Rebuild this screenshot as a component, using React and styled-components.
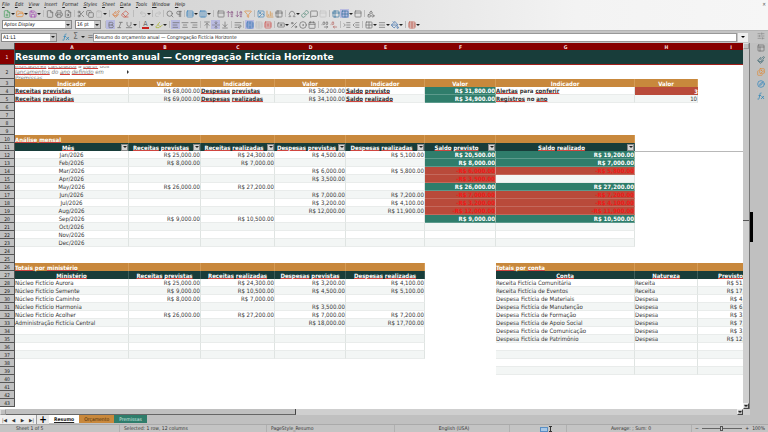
import React from 'react';
import styled, { createGlobalStyle, css } from 'styled-components';
import {
  FilePlus,
  FolderOpen,
  Save,
  File,
  Printer,
  FileSearch,
  Scissors,
  Copy,
  Clipboard,
  Paintbrush,
  Eraser,
  Undo2,
  Redo2,
  Search,
  Pilcrow,
  Rows3,
  Columns3,
  Table,
  Table2,
  ArrowUpAZ,
  ArrowDownAZ,
  Funnel,
  Image,
  ChartColumn,
  Omega,
  Link,
  MessageSquare,
  PanelTop,
  Grid2x2,
  Shapes,
  Bold,
  Italic,
  Underline,
  Highlighter,
  TextAlignStart,
  TextAlignCenter,
  TextAlignEnd,
  ArrowUpToLine,
  ArrowDownToLine,
  FoldVertical,
  WrapText,
  TableCellsMerge,
  TableCellsSplit,
  Banknote,
  Percent,
  CircleDot,
  Calendar,
  DecimalsArrowRight,
  DecimalsArrowLeft,
  ListIndentIncrease,
  ListIndentDecrease,
  Menu,
  PaintBucket,
  SlidersHorizontal,
  Images,
  Compass,
  PanelsTopLeft,
} from 'lucide-react';

const GlobalStyle = createGlobalStyle`
  * {
    box-sizing: border-box;
  }
  body {
    margin: 0;
    background: #c0c0c0;
    color: #333;
    font: 5px/8px 'DejaVu Sans Condensed', 'DejaVu Sans', sans-serif;
  }
  button,
  input,
  select {
    margin: 0;
    padding: 0;
    border: 0;
    border-radius: 0;
    background: none;
    color: inherit;
    font: inherit;
  }
`;

const Styled = {
  Window: styled.div`
    display: flex;
    flex-direction: column;
    height: 100vh;
    overflow: hidden;
  `,
  Chrome: styled.header`
    background: linear-gradient(90deg, #d0d0d0, #dadada 35%, #f3f3f3 75%, #f6f6f6);
    border-bottom: 1px solid #b4b4b4;
  `,
  MenuBar: styled.nav`
    display: flex;
    gap: 5px;
    height: 8px;
    padding: 0 2px;
    color: #222;
    font-style: italic;
    line-height: 7px;
  `,
  CloseButton: styled.button`
    margin-left: auto;
    line-height: 7px;
    color: #555;
  `,
  Toolbar: styled.div`
    display: flex;
    align-items: center;
    height: 11px;
    padding-left: 2px;
  `,
  Tool: styled.button`
    display: flex;
    flex: none;
    align-items: center;
    justify-content: center;
    width: 9px;
    height: 9px;
    color: ${({ $color }) => $color || '#666'};
    background: ${({ $active }) => ($active ? '#b9bbe0' : 'transparent')};
    opacity: ${({ $faded }) => ($faded ? 0.25 : 1)};
  `,
  Caret: styled.button`
    display: flex;
    flex: none;
    align-items: center;
    justify-content: center;
    width: 4px;
    height: 9px;
  `,
  CaretMark: styled.span`
    border: 2px solid transparent;
    border-top-color: ${({ $color }) => $color || '#222'};
    border-bottom: 0;
  `,
  Separator: styled.span`
    flex: none;
    width: ${({ $width }) => $width || 4}px;
    height: 7px;
    background: linear-gradient(#bbb, #bbb) center / 1px 100% no-repeat;
  `,
  ColorLetter: styled.span`
    width: 7px;
    height: 8px;
    border-bottom: 2px solid #c9211e;
    font-size: 7px;
    line-height: 6px;
    text-align: center;
  `,
  Combo: styled.label`
    display: flex;
    flex: none;
    width: ${({ $width }) => $width}px;
    height: 9px;
    margin-right: 3px;
    border: 1px solid #888;
    background: #fff;
    line-height: 7px;
  `,
  ComboInput: styled.input`
    flex: 1;
    min-width: 0;
    padding-left: 1px;
    color: #111;
    font-style: ${({ $italic }) => ($italic ? 'italic' : 'normal')};
    outline: 0;
  `,
  ComboArrow: styled.button`
    display: flex;
    align-items: center;
    justify-content: center;
    width: 6px;
    background: #c8c8c8;
  `,
  FormulaBar: styled.div`
    display: flex;
    align-items: center;
    height: 12px;
    padding: 0 20px 0 1px;
    background: #c4c4c4;
  `,
  FormulaTools: styled.div`
    display: flex;
    width: 33px;
    align-items: center;
    gap: 1px;
    padding-left: 1px;
    font-size: 8px;
  `,
  FormulaInput: styled.input`
    flex: 1;
    min-width: 0;
    height: 9px;
    padding-left: 1px;
    border: 1px solid #999;
    background: #fff;
    color: #222;
    outline: 0;
  `,
  FormulaExpand: styled.button`
    display: flex;
    align-items: center;
    justify-content: center;
    width: 10px;
    height: 9px;
    margin-left: 1px;
    background: #eee;
  `,
  Body: styled.div`
    display: flex;
    flex: 1;
    min-height: 0;
  `,
  SheetArea: styled.main`
    display: flex;
    flex: 1;
    flex-direction: column;
    min-width: 0;
  `,
  SheetRow: styled.div`
    display: flex;
    flex: 1;
    min-height: 0;
  `,
  Viewport: styled.div`
    flex: 1;
    min-width: 0;
    overflow: hidden;
    background: #fff;
  `,
  VerticalBar: styled.div`
    display: flex;
    flex-direction: column;
    justify-content: space-between;
    width: 7px;
    background: #cfcfcf;
    border-right: 1px solid #777;
  `,
  VerticalThumb: styled.div`
    height: 172px;
    margin-bottom: auto;
    background: #c6c6c6;
    border-bottom: 1px solid #555;
  `,
  BarButton: styled.button`
    display: flex;
    flex: none;
    align-items: center;
    justify-content: center;
    width: 6px;
    height: 6px;
    background: #c0c0c0;
    border: 1px solid;
    border-color: ${({ $soft }) => ($soft ? '#ddd #999 #999 #ddd' : '#eee #444 #444 #eee')};
  `,
  HorizontalBar: styled.div`
    display: flex;
    justify-content: space-between;
    height: 6px;
    padding-right: 7px;
    background: #cfcfcf;
  `,
  HorizontalThumb: styled.div`
    width: 39%;
    margin-right: auto;
    background: #c0c0c0;
    border-right: 1px solid #444;
    border-bottom: 1px solid #666;
  `,
  Sidebar: styled.aside`
    display: flex;
    width: 18px;
    background: #c0c0c0;
  `,
  SidebarHandle: styled.button`
    align-self: center;
    width: 3px;
    height: 30px;
    margin-bottom: 14px;
    background: #000;
  `,
  SidebarIcons: styled.div`
    display: flex;
    flex: 1;
    flex-direction: column;
    align-items: center;
    gap: 3px;
    margin-top: -12px;
  `,
  Tabs: styled.div`
    display: flex;
    height: 9px;
    background: #c0c0c0;
  `,
  TabNav: styled.button`
    width: 9px;
    background: #f0f0f0;
    line-height: 8px;
  `,
  AddTab: styled.button`
    width: 13px;
    background: #e8e8e8;
    border-left: 1px solid #999;
    color: #000;
    font-size: 10px;
    font-weight: 700;
    line-height: 8px;
  `,
  Tab: styled.button`
    height: 8px;
    padding: 0 5px;
    background: ${({ $color }) => $color};
    color: ${({ $text }) => $text};
    font-weight: ${({ $active }) => ($active ? 700 : 400)};
    text-decoration: ${({ $active }) => ($active ? 'underline' : 'none')};
    line-height: 8px;
  `,
  StatusBar: styled.footer`
    display: grid;
    grid-template-columns: 120fr 147fr 128fr 115fr 57fr 125fr 76fr;
    height: 8px;
    background: #c4c4c4;
    border-top: 1px solid #aaa;
    line-height: 7px;
  `,
  StatusItem: styled.div`
    display: flex;
    align-items: center;
    justify-content: ${({ $align }) => $align || 'flex-start'};
    padding-left: ${({ $indent }) => $indent || 4}px;
    border-right: 1px solid #b0b0b0;
    white-space: nowrap;
  `,
  Zoom: styled.div`
    display: flex;
    align-items: center;
    justify-content: space-between;
    padding: 0 3px;
  `,
  ZoomSlider: styled.input`
    appearance: none;
    width: 40px;
    height: 5px;
    background: linear-gradient(#666, #666) center / 100% 1px no-repeat;

    &::-webkit-slider-thumb {
      appearance: none;
      width: 3px;
      height: 5px;
      background: #ccc;
      border: 1px solid #555;
    }
  `,
};

const kinds = {
  blank: css`
    background: #fff;
  `,
  title: css`
    background: #183d3a;
    border-bottom: 1px solid #a3201c;
    color: #fff;
    font: 700 9px/13px 'DejaVu Sans', sans-serif;
  `,
  section: css`
    background: #c8883c;
    border-right: 1px solid #d49b56;
    color: #fff;
    font-weight: 700;
  `,
  head: css`
    background: #183d3a;
    border-right: 1px solid #3c5c59;
    color: #fff;
    font-weight: 700;
    text-align: center;
  `,
  plain: css`
    border-right: 1px solid #dfe4e2;
    border-bottom: 1px solid #e9eceb;
  `,
  strong: css`
    border-right: 1px solid #dfe4e2;
    border-bottom: 1px solid #e9eceb;
    font-weight: 700;
  `,
  positive: css`
    background: #2f7d6b;
    border-right: 1px solid #8fb8ae;
    border-bottom: 1px solid #5c9a8c;
    color: #fff;
    font-weight: 700;
  `,
  negative: css`
    background: #b94a3a;
    border-right: 1px solid #cf8a80;
    border-bottom: 1px solid #c4695c;
    color: #f01818;
    font-weight: 700;
  `,
  alert: css`
    background: #b94a3a;
    color: #fff;
    font-weight: 700;
  `,
};

const Grid = {
  Table: styled.table`
    width: 749px;
    table-layout: fixed;
    border-collapse: separate;
    border-spacing: 0;
    font-size: 6px;
    line-height: 7px;
  `,
  Column: styled.col`
    width: ${({ $width }) => $width}px;
  `,
  ColumnHead: styled.th`
    height: 7px;
    padding: 0;
    background: #870000;
    color: #f3dcdc;
    font-size: 5px;
    line-height: 6px;
  `,
  RowHead: styled.th`
    height: ${({ $height }) => $height}px;
    padding: 0;
    background: ${({ $selected }) => ($selected ? '#870000' : '#c0c0c0')};
    border-right: 1px solid #555;
    border-bottom: 1px solid #555;
    color: ${({ $selected }) => ($selected ? '#fff' : '#222')};
    font-size: 5px;
    font-weight: 400;
    line-height: 6px;
  `,
  Cell: styled.td`
    padding: 0;
    background: ${({ $striped }) => ($striped ? '#f3f6f5' : '#fff')};
    text-align: ${({ $align }) => $align || 'left'};
    white-space: nowrap;
    ${({ $kind }) => kinds[$kind]}
    ${({ $frozen }) => $frozen && 'border-top: 1px solid #b8b8b8;'}
  `,
  Note: styled.div`
    display: flex;
    align-items: center;
    height: 13px;
    overflow: hidden;
    color: #777;
    font-style: italic;
    line-height: 6px;
    white-space: normal;
  `,
  NoteText: styled.span`
    width: 100px;
  `,
  NoteArrow: styled.span`
    margin-left: auto;
    border: 2px solid transparent;
    border-left-color: #333;
    border-right: 0;
  `,
  Filterable: styled.div`
    display: flex;
    align-items: center;
    height: 8px;
  `,
  FilterLabel: styled.span`
    flex: 1;
    min-width: 0;
  `,
  FilterButton: styled.button`
    display: flex;
    flex: none;
    align-items: center;
    justify-content: center;
    width: 7px;
    height: 7px;
    background: #d4d4d4;
    border: 1px solid #888;
  `,
  Misspelled: styled.span`
    text-decoration: underline 1px #d0453f;
    text-decoration-skip-ink: none;
    text-underline-offset: 0;
  `,
};

const columns = [
  ['A', 114],
  ['B', 72],
  ['C', 74],
  ['D', 71],
  ['E', 79],
  ['F', 71],
  ['G', 139],
  ['H', 63],
  ['I', 66],
];

const title = 'Resumo do orçamento anual — Congregação Fictícia Horizonte';

const months = [
  ['Jan/2026', '25,000', '24,300', '4,500', '5,100', '20,500', '19,200'],
  ['Feb/2026', '8,000', '7,000', '', '', '8,000', '7,000'],
  ['Mar/2026', '', '', '6,000', '5,800', '-6,000', '-5,800'],
  ['Apr/2026', '', '', '3,500', '', '-3,500', ''],
  ['May/2026', '26,000', '27,200', '', '', '26,000', '27,200'],
  ['Jun/2026', '', '', '7,000', '7,200', '-7,000', '-7,200'],
  ['Jul/2026', '', '', '3,200', '4,100', '-3,200', '-4,100'],
  ['Aug/2026', '', '', '12,000', '11,900', '-12,000', '-11,900'],
  ['Sep/2026', '9,000', '10,500', '', '', '9,000', '10,500'],
  ['Oct/2026', '', '', '', '', '', ''],
  ['Nov/2026', '', '', '', '', '', ''],
  ['Dec/2026', '', '', '', '', '', ''],
];

const ministries = [
  ['Núcleo Fictício Aurora', '25,000', '24,300', '3,200', '4,100'],
  ['Núcleo Fictício Semente', '9,000', '10,500', '4,500', '5,100'],
  ['Núcleo Fictício Caminho', '8,000', '7,000', '', ''],
  ['Núcleo Fictício Harmonia', '', '', '3,500', ''],
  ['Núcleo Fictício Acolher', '26,000', '27,200', '7,000', '7,200'],
  ['Administração Fictícia Central', '', '', '18,000', '17,700'],
];

const accounts = [
  ['Receita Fictícia Comunitária', 'Receita', '51,000'],
  ['Receita Fictícia de Eventos', 'Receita', '17,000'],
  ['Despesa Fictícia de Materiais', 'Despesa', '4,500'],
  ['Despesa Fictícia de Manutenção', 'Despesa', '6,000'],
  ['Despesa Fictícia de Formação', 'Despesa', '3,500'],
  ['Despesa Fictícia de Apoio Social', 'Despesa', '7,000'],
  ['Despesa Fictícia de Comunicação', 'Despesa', '3,200'],
  ['Despesa Fictícia de Patrimônio', 'Despesa', '12,000'],
];

const money = value => {
  if (!value) return '';
  return value[0] === '-' ? `-R$ ${value.slice(1)}.00` : `R$ ${value}.00`;
};

const cell = (text, kind = 'plain', align) => ({ text, kind, align });
const amount = (value, kind) => cell(money(value), kind, 'right');
const balance = value => {
  if (!value) return amount('');
  return amount(value, value[0] === '-' ? 'negative' : 'positive');
};
const checked = (text, kind, align) => ({ text, kind, align, spell: true });
const blanks = count => Array.from({ length: count }, () => cell('', 'blank'));

const buildRow = number => {
  if (number === 3) {
    const labels = ['Indicador', 'Valor'];
    return [
      ...Array.from({ length: 8 }, (_, i) => cell(labels[i % 2], 'section', 'center')),
      ...blanks(1),
    ];
  }
  if (number === 4) {
    return [
      checked('Receitas previstas', 'strong'),
      amount('68,000'),
      checked('Despesas previstas', 'strong'),
      amount('36,200'),
      checked('Saldo previsto', 'strong'),
      amount('31,800', 'positive'),
      checked('Alertas para conferir', 'strong'),
      cell('3', 'alert', 'right'),
      ...blanks(1),
    ];
  }
  if (number === 5) {
    return [
      checked('Receitas realizadas', 'strong'),
      amount('69,000'),
      checked('Despesas realizadas', 'strong'),
      amount('34,100'),
      checked('Saldo realizado', 'strong'),
      amount('34,900', 'positive'),
      checked('Registros no ano', 'strong'),
      cell('10', 'plain', 'right'),
      ...blanks(1),
    ];
  }
  if (number === 10) {
    return [
      checked('Análise mensal', 'section'),
      ...Array.from({ length: 6 }, () => cell('', 'section')),
      ...blanks(2),
    ];
  }
  if (number === 11) {
    return [
      ...[
        'Mês',
        'Receitas previstas',
        'Receitas realizadas',
        'Despesas previstas',
        'Despesas realizadas',
        'Saldo previsto',
        'Saldo realizado',
      ].map(text => ({ ...checked(text, 'head', 'center'), filter: true })),
      ...blanks(2),
    ];
  }
  if (number >= 12 && number <= 23) {
    const [month, ...values] = months[number - 12];
    return [
      cell(month, 'plain', 'center'),
      ...values.slice(0, 4).map(value => amount(value)),
      ...values.slice(4).map(balance),
      ...blanks(2),
    ];
  }
  if (number === 26) {
    return [
      checked('Totais por ministério', 'section'),
      ...Array.from({ length: 4 }, () => cell('', 'section')),
      ...blanks(1),
      checked('Totais por conta', 'section'),
      cell('', 'section'),
      cell('', 'section'),
    ];
  }
  if (number === 27) {
    return [
      ...[
        'Ministério',
        'Receitas previstas',
        'Receitas realizadas',
        'Despesas previstas',
        'Despesas realizadas',
      ].map(text => checked(text, 'head', 'center')),
      ...blanks(1),
      ...['Conta', 'Natureza', 'Previsto'].map(text => checked(text, 'head', 'center')),
    ];
  }
  if (number >= 28 && number <= 39) {
    const [ministry, ...values] = ministries[number - 28] || ['', '', '', '', ''];
    const [account, nature, planned] = accounts[number - 28] || ['', '', ''];
    const left = [cell(ministry), ...values.map(value => amount(value))];
    return [
      ...(number <= 37 ? left : blanks(5)),
      ...blanks(1),
      cell(account),
      cell(nature),
      amount(planned),
    ];
  }
  return blanks(9);
};

const SpellChecked = ({ text }) => {
  const known = ['para', 'no', 'do', 'por', 'a', 'em', 'dos'];
  return text.split(' ').map((word, i) => (
    <React.Fragment key={i}>
      {i > 0 && ' '}
      {known.includes(word) ? word : <Grid.Misspelled>{word}</Grid.Misspelled>}
    </React.Fragment>
  ));
};

const CellContent = ({ data }) => {
  const text = data.spell ? <SpellChecked text={data.text} /> : data.text;
  if (!data.filter) return text;
  return (
    <Grid.Filterable>
      <Grid.FilterLabel>{text}</Grid.FilterLabel>
      <Grid.FilterButton aria-label={`Filter ${data.text}`}>
        <Styled.CaretMark />
      </Grid.FilterButton>
    </Grid.Filterable>
  );
};

const Sheet = () => (
  <Grid.Table>
    <colgroup>
      <Grid.Column $width={15} />
      {columns.map(([name, width]) => (
        <Grid.Column key={name} $width={width} />
      ))}
    </colgroup>
    <thead>
      <tr>
        <Grid.RowHead $height={7} />
        {columns.map(([name]) => (
          <Grid.ColumnHead key={name} scope="col">
            {name}
          </Grid.ColumnHead>
        ))}
      </tr>
    </thead>
    <tbody>
      <tr>
        <Grid.RowHead scope="row" $height={15} $selected>
          1
        </Grid.RowHead>
        <Grid.Cell colSpan={9} $kind="title">
          {title}
        </Grid.Cell>
      </tr>
      <tr>
        <Grid.RowHead scope="row" $height={14}>
          2
        </Grid.RowHead>
        <Grid.Cell $kind="blank">
          <Grid.Note>
            <Grid.NoteText>
              <SpellChecked text="Indicadores calculados a partir dos lançamentos do ano definido em Premissas" />
            </Grid.NoteText>
            <Grid.NoteArrow />
          </Grid.Note>
        </Grid.Cell>
        <Grid.Cell colSpan={8} $kind="blank" />
      </tr>
      {Array.from({ length: 41 }, (_, i) => i + 3).map(number => (
        <tr key={number}>
          <Grid.RowHead scope="row" $height={8}>
            {number}
          </Grid.RowHead>
          {buildRow(number).map((data, i) => (
            <Grid.Cell
              key={i}
              $kind={data.kind}
              $align={data.align}
              $striped={number % 2 === 1}
              $frozen={number === 12 && i > 6}
            >
              <CellContent data={data} />
            </Grid.Cell>
          ))}
        </tr>
      ))}
    </tbody>
  </Grid.Table>
);

const CARET = 'caret';

const standardTools = [
  { icon: FilePlus, label: 'New', color: '#3f9a55' },
  CARET,
  { icon: FolderOpen, label: 'Open', color: '#e8862c' },
  CARET,
  { icon: Save, label: 'Save', color: '#a03fb0' },
  CARET,
  4,
  { icon: File, label: 'Export as PDF' },
  { icon: Printer, label: 'Print' },
  { icon: FileSearch, label: 'Print preview' },
  4,
  { icon: Scissors, label: 'Cut' },
  { icon: Copy, label: 'Copy' },
  { icon: Clipboard, label: 'Paste', faded: true },
  CARET,
  4,
  { icon: Paintbrush, label: 'Clone formatting', color: '#d9783a' },
  { icon: Eraser, label: 'Clear formatting', color: '#c94a3a' },
  9,
  { icon: Undo2, label: 'Undo', faded: true },
  CARET,
  2,
  { icon: Redo2, label: 'Redo', faded: true },
  3,
  { icon: Search, label: 'Find and replace' },
  { icon: Pilcrow, label: 'Spelling' },
  2,
  { icon: Rows3, label: 'Row', color: '#2a7ab8' },
  CARET,
  { icon: Columns3, label: 'Column', color: '#2a7ab8' },
  CARET,
  5,
  { icon: PanelTop, label: 'Sort' },
  { icon: ArrowUpAZ, label: 'Sort ascending', color: '#8a5585' },
  { icon: ArrowDownAZ, label: 'Sort descending', color: '#8a5585' },
  { icon: Funnel, label: 'AutoFilter', color: '#df8b3a' },
  4,
  { icon: Image, label: 'Insert image', color: '#3a80b5' },
  { icon: ChartColumn, label: 'Insert chart', color: '#d48a34' },
  { icon: Table2, label: 'Pivot table' },
  4,
  { icon: Omega, label: 'Special character' },
  CARET,
  { icon: Link, label: 'Hyperlink', color: '#47826f' },
  { icon: MessageSquare, label: 'Comment' },
  { icon: PanelTop, label: 'Headers and footers', faded: true },
  4,
  { icon: Table2, label: 'Print area', color: '#2a6c9c' },
  { icon: Grid2x2, label: 'Freeze rows and columns', color: '#2a6c9c', active: true },
  CARET,
  { icon: PanelTop, label: 'Split window' },
  4,
  { icon: Shapes, label: 'Draw functions' },
];

const formattingTools = [
  { icon: Bold, label: 'Bold', active: true },
  { icon: Italic, label: 'Italic' },
  { icon: Underline, label: 'Underline' },
  CARET,
  4,
  { letter: 'A', label: 'Font color' },
  CARET,
  { icon: Highlighter, label: 'Background color', color: '#a5b020' },
  CARET,
  4,
  { icon: TextAlignStart, label: 'Align left', active: true },
  { icon: TextAlignCenter, label: 'Align center' },
  { icon: TextAlignEnd, label: 'Align right' },
  4,
  { icon: ArrowUpToLine, label: 'Align top' },
  { icon: FoldVertical, label: 'Center vertically', active: true },
  { icon: ArrowDownToLine, label: 'Align bottom' },
  4,
  { icon: WrapText, label: 'Wrap text' },
  3,
  { icon: TableCellsMerge, label: 'Merge and center', color: '#2f72b4', active: true },
  { icon: Table, label: 'Merge cells', faded: true },
  { icon: TableCellsSplit, label: 'Unmerge cells', color: '#cc4a45' },
  4,
  { icon: Banknote, label: 'Currency' },
  CARET,
  { icon: Percent, label: 'Percent' },
  { icon: CircleDot, label: 'Number' },
  { icon: Calendar, label: 'Date' },
  4,
  { icon: DecimalsArrowRight, label: 'Add decimal place' },
  { icon: DecimalsArrowLeft, label: 'Delete decimal place', color: '#b4605c' },
  4,
  { icon: ListIndentIncrease, label: 'Increase indent' },
  { icon: ListIndentDecrease, label: 'Decrease indent' },
  4,
  { icon: Grid2x2, label: 'Borders' },
  CARET,
  { icon: Menu, label: 'Border style' },
  CARET,
  { icon: PaintBucket, label: 'Border color', color: '#2a62a4' },
  CARET,
  4,
  { icon: Table, label: 'Conditional', color: '#b94a3a' },
  CARET,
];

const sidebarTools = [
  { icon: SlidersHorizontal, label: 'Sidebar settings', color: '#888' },
  { icon: PanelsTopLeft, label: 'Properties' },
  { icon: Paintbrush, label: 'Styles', color: '#35606c' },
  { icon: Images, label: 'Gallery', color: '#e08a35' },
  { icon: Compass, label: 'Navigator', color: '#2680bd' },
];

const Tools = ({ items }) =>
  items.map((item, i) => {
    if (item === CARET) {
      return (
        <Styled.Caret key={i} aria-label="More options">
          <Styled.CaretMark />
        </Styled.Caret>
      );
    }
    if (typeof item === 'number') return <Styled.Separator key={i} $width={item} />;
    const Icon = item.icon;
    return (
      <Styled.Tool
        key={i}
        aria-label={item.label}
        $color={item.color}
        $active={item.active}
        $faded={item.faded}
      >
        {Icon ? <Icon size={8} /> : <Styled.ColorLetter>{item.letter}</Styled.ColorLetter>}
      </Styled.Tool>
    );
  });

const ComboBox = ({ label, value, width, italic }) => (
  <Styled.Combo $width={width}>
    <Styled.ComboInput aria-label={label} defaultValue={value} $italic={italic} />
    <Styled.ComboArrow aria-label={`${label} list`}>
      <Styled.CaretMark />
    </Styled.ComboArrow>
  </Styled.Combo>
);

const FunctionIcon = ({ size = 8 }) => (
  <svg width={size} height={size} viewBox="0 0 16 16" fill="none" stroke="#2e86b8" strokeWidth="1.5">
    <path d="M9 2C6 1 6 4 5.500 7L4 13C3.500 15 2 15 1 14M3 7h5M9 8l5 6M14 8l-6 6" />
  </svg>
);

const menus = [
  'File',
  'Edit',
  'View',
  'Insert',
  'Format',
  'Styles',
  'Sheet',
  'Data',
  'Tools',
  'Window',
  'Help',
];

const App = () => (
  <>
    <GlobalStyle />
    <Styled.Window>
      <Styled.Chrome>
        <Styled.MenuBar>
          {menus.map(name => (
            <button key={name}>
              <u>{name[0]}</u>
              {name.slice(1)}
            </button>
          ))}
          <Styled.CloseButton aria-label="Close">✕</Styled.CloseButton>
        </Styled.MenuBar>
        <Styled.Toolbar>
          <Tools items={standardTools} />
        </Styled.Toolbar>
        <Styled.Toolbar>
          <ComboBox label="Font name" value="Aptos Display" width={70} italic />
          <ComboBox label="Font size" value="16 pt" width={26} />
          <Tools items={[2, ...formattingTools]} />
        </Styled.Toolbar>
      </Styled.Chrome>

      <Styled.FormulaBar>
        <ComboBox label="Name box" value="A1:L1" width={56} />
        <Styled.FormulaTools>
          <Styled.Tool aria-label="Function wizard">
            <FunctionIcon />
          </Styled.Tool>
          <Styled.Tool aria-label="Select function">Σ</Styled.Tool>
          <Styled.CaretMark />
          <Styled.Tool aria-label="Formula">=</Styled.Tool>
        </Styled.FormulaTools>
        <Styled.FormulaInput aria-label="Input line" defaultValue={title} />
        <Styled.FormulaExpand aria-label="Expand formula bar">
          <Styled.CaretMark $color="#000" />
        </Styled.FormulaExpand>
      </Styled.FormulaBar>

      <Styled.Body>
        <Styled.SheetArea>
          <Styled.SheetRow>
            <Styled.Viewport>
              <Sheet />
            </Styled.Viewport>
            <Styled.VerticalBar>
              <Styled.BarButton aria-label="Scroll up" $soft />
              <Styled.VerticalThumb />
              <Styled.BarButton aria-label="Scroll down">
                <Styled.CaretMark />
              </Styled.BarButton>
            </Styled.VerticalBar>
          </Styled.SheetRow>
          <Styled.HorizontalBar>
            <Styled.BarButton aria-label="Scroll left" $soft />
            <Styled.HorizontalThumb />
            <Styled.BarButton aria-label="Scroll right">
              <Styled.CaretMark />
            </Styled.BarButton>
          </Styled.HorizontalBar>
          <Styled.Tabs>
            <Styled.TabNav aria-label="First sheet">|◀</Styled.TabNav>
            <Styled.TabNav aria-label="Previous sheet">◀</Styled.TabNav>
            <Styled.TabNav aria-label="Next sheet">▶</Styled.TabNav>
            <Styled.TabNav aria-label="Last sheet">▶|</Styled.TabNav>
            <Styled.AddTab aria-label="Add sheet">+</Styled.AddTab>
            <Styled.Tab $color="#fff" $text="#222" $active>
              Resumo
            </Styled.Tab>
            <Styled.Tab $color="#c8883c" $text="#4a2c08">
              Orçamento
            </Styled.Tab>
            <Styled.Tab $color="#2f7d6b" $text="#d4ebe4">
              Premissas
            </Styled.Tab>
          </Styled.Tabs>
        </Styled.SheetArea>
        <Styled.Sidebar>
          <Styled.SidebarHandle aria-label="Hide sidebar" />
          <Styled.SidebarIcons>
            <Tools items={sidebarTools} />
            <Styled.Tool aria-label="Functions">
              <FunctionIcon />
            </Styled.Tool>
          </Styled.SidebarIcons>
        </Styled.Sidebar>
      </Styled.Body>

      <Styled.StatusBar>
        <Styled.StatusItem $indent={16}>Sheet 1 of 5</Styled.StatusItem>
        <Styled.StatusItem>Selected: 1 row, 12 columns</Styled.StatusItem>
        <Styled.StatusItem>PageStyle_Resumo</Styled.StatusItem>
        <Styled.StatusItem $align="center">English (USA)</Styled.StatusItem>
        <Styled.StatusItem $align="center" $indent={16}>
          <svg width="12" height="6" viewBox="0 0 12 6" fill="none">
            <rect x="0.500" y="1.500" width="7" height="4" fill="#a9c8e6" stroke="#5a8fc4" />
            <path d="M9 0.500h3M10.500 0.500v5M9 5.500h3" stroke="#333" />
          </svg>
        </Styled.StatusItem>
        <Styled.StatusItem $align="center">Average: ; Sum: 0</Styled.StatusItem>
        <Styled.Zoom>
          <button aria-label="Zoom out">−</button>
          <Styled.ZoomSlider type="range" aria-label="Zoom" defaultValue={50} />
          <button aria-label="Zoom in">+</button>
          <span>100%</span>
        </Styled.Zoom>
      </Styled.StatusBar>
    </Styled.Window>
  </>
);

export default App;
